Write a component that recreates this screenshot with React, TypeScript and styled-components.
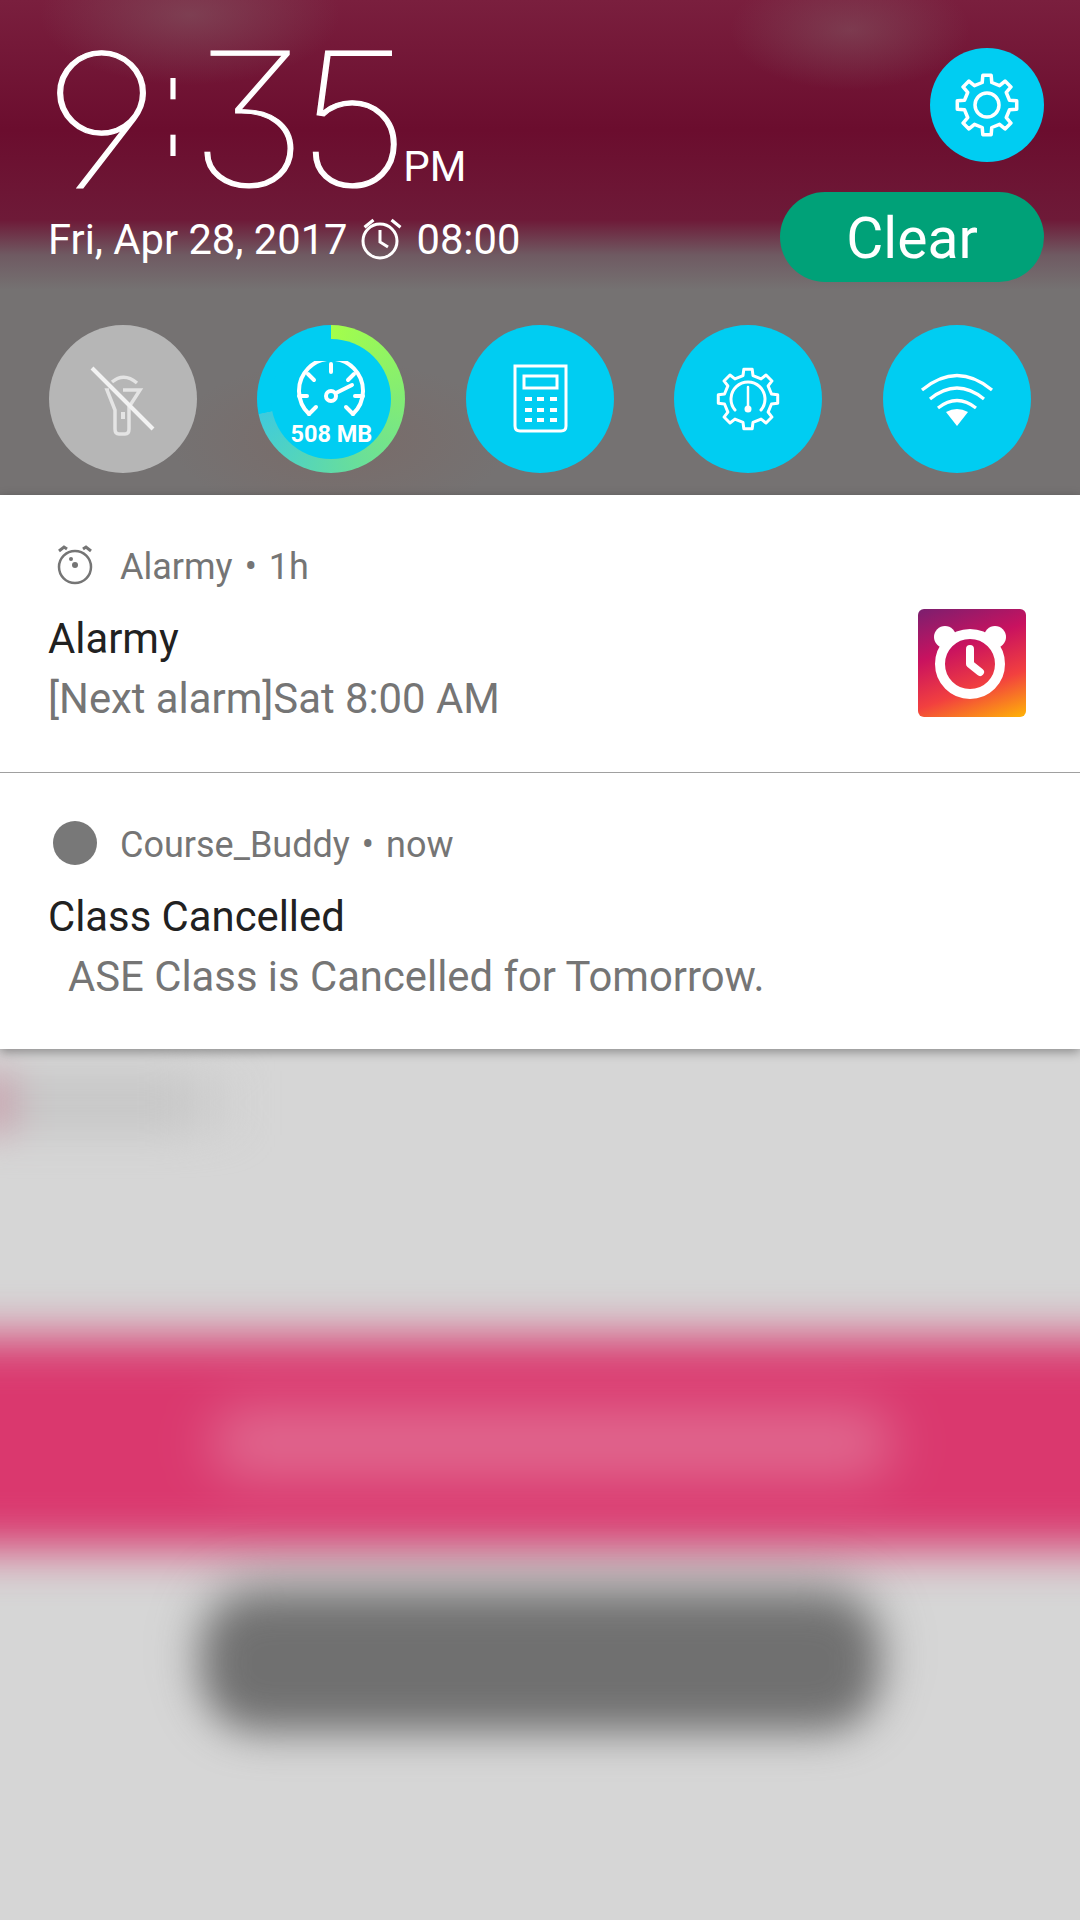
import React from 'react'
import styled, { createGlobalStyle } from 'styled-components'

const GlobalStyle = createGlobalStyle`
  html, body {
    margin: 0;
    padding: 0;
    background: #d6d6d6;
  }
  body {
    font-family: Roboto, "Liberation Sans", sans-serif;
  }
`

const Screen = styled.div`
  width: 1080px;
  height: 1920px;
  display: flex;
  flex-direction: column;
  overflow: hidden;
`

const Shade = styled.header`
  height: 495px;
  box-sizing: border-box;
  padding: 48px 36px 22px 49px;
  display: flex;
  flex-direction: column;
  color: #fff;
  background:
    radial-gradient(ellipse 150px 70px at 190px 15px, rgba(130, 90, 100, 0.55), transparent),
    radial-gradient(ellipse 120px 60px at 850px 30px, rgba(130, 90, 100, 0.5), transparent),
    radial-gradient(ellipse 170px 80px at 340px 440px, rgba(125, 100, 95, 0.5), transparent),
    linear-gradient(180deg, #7a1f3e 0, #6b0d2e 130px, #6e1a38 220px, #6f5a62 255px, #757272 290px, #757272 100%);
`

const TopRow = styled.div`
  display: flex;
  justify-content: space-between;
`

const Clock = styled.div`
  display: flex;
  flex-direction: column;
`

const TimeRow = styled.div`
  display: flex;
  align-items: baseline;
  height: 150px;
  margin-top: -4px;
  line-height: 150px;
`

const Digits = styled.span`
  display: inline-block;
  font-family: Inter, sans-serif;
  font-weight: 100;
  font-size: 186px;
  font-feature-settings: "cv04", "cv09";
  letter-spacing: -10px;
  -webkit-text-stroke: 1.2px #fff;
  transform: scaleX(1.09);
`

const Nine = styled(Digits)`
  letter-spacing: 0;
  transform: translateY(2px) scaleX(1.12);
`

const Colon = styled.span`
  display: inline-block;
  font-family: "Liberation Sans", sans-serif;
  font-weight: 700;
  font-size: 36px;
  line-height: 1;
  margin: 0 19px 0 13px;
  transform-origin: 50% 100%;
  transform: translateY(-10px) scaleY(4.28);
`

const Meridiem = styled.span`
  font-size: 42px;
  margin-left: 12px;
  transform: translateY(-5px);
`

const DateRow = styled.div`
  display: flex;
  align-items: center;
  height: 50px;
  margin: 21px 0 0 -1px;
  font-size: 41.7px;
  line-height: 50px;
`

const Actions = styled.div`
  display: flex;
  flex-direction: column;
  align-items: flex-end;
  gap: 30px;
`

const Round = styled.div<{ $size?: number }>`
  width: ${p => p.$size ?? 148}px;
  height: ${p => p.$size ?? 148}px;
  border-radius: 50%;
  background: #00cdf2;
  display: flex;
  align-items: center;
  justify-content: center;
`

const ClearButton = styled.div`
  width: 264px;
  height: 90px;
  box-sizing: border-box;
  padding-top: 3px;
  border-radius: 45px;
  background: #00a178;
  display: flex;
  align-items: center;
  justify-content: center;
  font-size: 57px;
`

const QuickRow = styled.div`
  display: flex;
  justify-content: space-between;
  width: 981.6px;
  margin-top: 43px;
`

const OffRound = styled(Round)`
  background: #b6b6b6;
`

const BoostRing = styled(Round)`
  background: conic-gradient(#a4fe4a 0deg, #82ec75 90deg, #64dca2 170deg, #3fcbdc 258deg, #00cdf2 258.5deg);
`

const BoostInner = styled(Round)`
  flex-direction: column;
  color: #fff;
`

const BoostLabel = styled.span`
  font-size: 23.5px;
  font-weight: 700;
  line-height: 24px;
  margin-top: -1px;
  margin-bottom: -9px;
`

const Cards = styled.div`
  position: relative;
  z-index: 1;
  background: #fff;
  box-shadow: 0 3px 10px rgba(0, 0, 0, 0.35);
`

const Card = styled.section<{ $divider?: boolean }>`
  height: ${p => (p.$divider ? 278 : 276)}px;
  box-sizing: border-box;
  padding: 48px 54px 0 48px;
  border-bottom: ${p => (p.$divider ? '1px solid #a0a0a0' : '0')};
`

const CardHead = styled.div`
  display: flex;
  align-items: center;
  height: 44px;
  font-size: 36px;
  color: #757575;
`

const AppDot = styled.span`
  width: 44px;
  height: 44px;
  margin-left: 5px;
  border-radius: 50%;
  background: #787878;
`

const HeadIcon = styled.svg`
  width: 44px;
  height: 44px;
  margin-left: 5px;
`

const AppName = styled.span`
  margin-left: 23px;
  padding-top: 4px;
`

const Bullet = styled.span`
  margin: 0 12px;
  padding-top: 4px;
`

const Age = styled.span`
  padding-top: 4px;
`

const CardBody = styled.div`
  display: flex;
  justify-content: space-between;
  margin-top: 22px;
`

const Title = styled.div`
  font-size: 41.8px;
  line-height: 60px;
  color: #212121;
`

const Message = styled.div<{ $indent?: number }>`
  font-size: 41.8px;
  line-height: 60px;
  color: #757575;
  padding-left: ${p => p.$indent ?? 0}px;
`

const Thumb = styled.div`
  width: 108px;
  height: 108px;
  border-radius: 6px;
  background: linear-gradient(160deg, #7b1f6f 0%, #c9125f 36%, #f2403f 68%, #ffb406 100%);
`

const Backdrop = styled.div`
  flex: 1;
  display: flex;
  flex-direction: column;
  overflow: hidden;
  background: #d6d6d6;
`

const Smudge = styled.div`
  width: 270px;
  height: 64px;
  margin: 22px 0 0 -20px;
  background: linear-gradient(90deg, #c88ea0 0, #c8c8c8 18%, #c8c8c8 70%, transparent 100%);
  filter: blur(18px);
`

const Banner = styled.div`
  height: 212px;
  margin: 202px -60px 0;
  background: #da386e;
  filter: blur(24px);
  display: flex;
  align-items: center;
  justify-content: center;
`

const BannerText = styled.div`
  width: 680px;
  height: 70px;
  margin-left: 24px;
  background: #e06a90;
  border-radius: 30px;
  filter: blur(14px);
`

const Pill = styled.div`
  align-self: center;
  width: 675px;
  height: 134px;
  margin-top: 48px;
  border-radius: 55px;
  background: #707070;
  filter: blur(20px);
  box-shadow: 0 -14px 30px rgba(90, 90, 90, 0.5);
`

// teeth of the gear icons, drawn round (cx, cy)
const gearPath = (cx: number, cy: number, inner: number, outer: number, teeth = 8) => {
  const pt = (r: number, deg: number) => {
    const a = (deg * Math.PI) / 180
    return `${(cx + r * Math.sin(a)).toFixed(2)} ${(cy - r * Math.cos(a)).toFixed(2)}`
  }
  const step = 360 / teeth
  let d = ''
  for (let i = 0; i < teeth; i++) {
    const a = i * step
    d += `${i === 0 ? 'M' : 'L'}${pt(inner, a - 12)} L${pt(outer, a - 8)} L${pt(outer, a + 8)} L${pt(inner, a + 12)} `
  }
  return d + 'Z'
}

const line = { fill: 'none', stroke: '#fff', strokeWidth: 3.5, strokeLinejoin: 'round', strokeLinecap: 'round' } as const

const GearIcon = () => (
  <svg width="72" height="72" viewBox="0 0 72 72">
    <path d={gearPath(36, 36, 23, 30)} {...line} />
    <circle cx="36" cy="36" r="12" {...line} />
  </svg>
)

const SmallAlarm = () => (
  <svg width="44" height="44" viewBox="0 0 44 44" style={{ marginLeft: 12, marginRight: 13 }}>
    <circle cx="20" cy="23" r="17" fill="none" stroke="#fff" strokeWidth="3" />
    <path d="M5 7 L15 -1 M35 -1 L45 7" transform="translate(0 3) scale(.9)" fill="none" stroke="#fff" strokeWidth="3.5" />
    <path d="M20 12 V24 L28 29" fill="none" stroke="#fff" strokeWidth="3" />
  </svg>
)

const FlashlightOff = () => (
  <svg width="148" height="148" viewBox="0 0 148 148">
    <g fill="none" stroke="#e4e4e4" strokeWidth="3.5">
      <path d="M60 65 H58 L66 85 V104 Q66 109 70 109 H76 Q80 109 80 104 V82 L91 65 H74" />
      <path d="M63 57 Q75 47 88 58" />
      <path d="M43 43 L104 104" stroke="#f2f2f2" strokeWidth="4" />
    </g>
    <rect x="72" y="87" width="4" height="7" fill="#e4e4e4" />
  </svg>
)

const SpeedIcon = () => (
  <svg width="72" height="62" viewBox="0 0 72 62">
    <g {...line} strokeWidth={4}>
      <path d="M14 53 A32 32 0 1 1 58 53" />
      <path d="M36 3 V11 M13 13 L19 19 M59 13 L53 19 M4 35 H12 M60 35 H68" />
      <path d="M14 53 L21 46 M58 53 L51 46" />
      <path d="M41 32 L57 24" />
      <circle cx="36" cy="35" r="5" />
    </g>
  </svg>
)

const CalculatorIcon = () => (
  <svg width="60" height="72" viewBox="0 0 60 72">
    <path d="M5 3 H56 V63 Q56 68 51 68 H10 Q5 68 5 63 Z" fill="none" stroke="#fff" strokeWidth="3" />
    <rect x="14" y="13" width="33" height="12" fill="none" stroke="#fff" strokeWidth="3" />
    {[34, 45, 55].map(y =>
      [15, 27, 40].map(x => <rect key={`${x}-${y}`} x={x} y={y} width="7" height="4" fill="#fff" />)
    )}
  </svg>
)

const GaugeGearIcon = () => (
  <svg width="72" height="72" viewBox="0 0 72 72">
    <path d={gearPath(36, 36, 24, 30)} {...line} strokeWidth={3} />
    <path d="M23 47 A17 17 0 1 1 49 47" {...line} strokeWidth={3} />
    <path d="M36 24 V44" {...line} strokeWidth={2.5} />
    <circle cx="36" cy="46" r="3.5" fill="#fff" />
  </svg>
)

const WifiIcon = () => (
  <svg width="76" height="56" viewBox="0 0 76 56">
    <g fill="none" stroke="#fff" strokeWidth="3.2">
      <path d="M3 19 Q38 -10 73 19" />
      <path d="M11 28 Q38 6 65 28" />
      <path d="M19 37 Q38 22 57 37" />
    </g>
    <path d="M27 41 Q38 35 49 41 L38 55 Z" fill="#fff" />
  </svg>
)

const AlarmyBell = () => (
  <svg width="108" height="108" viewBox="0 0 108 108">
    <circle cx="27" cy="28" r="11" fill="#fff" />
    <circle cx="77" cy="28" r="11" fill="#fff" />
    <circle cx="52" cy="55" r="30" fill="none" stroke="#fff" strokeWidth="10" />
    <path d="M52 40 V55 L62 63" fill="none" stroke="#fff" strokeWidth="8" strokeLinecap="round" strokeLinejoin="round" />
  </svg>
)

const App = () => {
  return (
    <Screen>
      <GlobalStyle />
      <Shade>
        <TopRow>
          <Clock>
            <TimeRow>
              <Nine>9</Nine>
              <Colon>:</Colon>
              <Digits>35</Digits>
              <Meridiem>PM</Meridiem>
            </TimeRow>
            <DateRow>
              Fri, Apr 28, 2017
              <SmallAlarm />
              08:00
            </DateRow>
          </Clock>
          <Actions>
            <Round $size={114}>
              <GearIcon />
            </Round>
            <ClearButton>Clear</ClearButton>
          </Actions>
        </TopRow>
        <QuickRow>
          <OffRound>
            <FlashlightOff />
          </OffRound>
          <BoostRing>
            <BoostInner $size={120}>
              <SpeedIcon />
              <BoostLabel>508 MB</BoostLabel>
            </BoostInner>
          </BoostRing>
          <Round>
            <CalculatorIcon />
          </Round>
          <Round>
            <GaugeGearIcon />
          </Round>
          <Round>
            <WifiIcon />
          </Round>
        </QuickRow>
      </Shade>
      <Cards>
        <Card $divider>
          <CardHead>
            <HeadIcon viewBox="0 0 44 44">
              <circle cx="22" cy="24" r="16" fill="none" stroke="#757575" strokeWidth="2.5" />
              <path d="M6 8 L11 4 L14 6 M38 8 L33 4 L30 6" fill="none" stroke="#757575" strokeWidth="3" />
              <circle cx="22" cy="22" r="3" fill="#757575" />
              <circle cx="18" cy="16" r="2" fill="#757575" />
            </HeadIcon>
            <AppName>Alarmy</AppName>
            <Bullet>•</Bullet>
            <Age>1h</Age>
          </CardHead>
          <CardBody>
            <div>
              <Title>Alarmy</Title>
              <Message>[Next alarm]Sat 8:00 AM</Message>
            </div>
            <Thumb>
              <AlarmyBell />
            </Thumb>
          </CardBody>
        </Card>
        <Card>
          <CardHead>
            <AppDot />
            <AppName>Course_Buddy</AppName>
            <Bullet>•</Bullet>
            <Age>now</Age>
          </CardHead>
          <CardBody>
            <div>
              <Title>Class Cancelled</Title>
              <Message $indent={20}>ASE Class is Cancelled for Tomorrow.</Message>
            </div>
          </CardBody>
        </Card>
      </Cards>
      <Backdrop>
        <Smudge />
        <Banner>
          <BannerText />
        </Banner>
        <Pill />
      </Backdrop>
    </Screen>
  )
}

export default App
